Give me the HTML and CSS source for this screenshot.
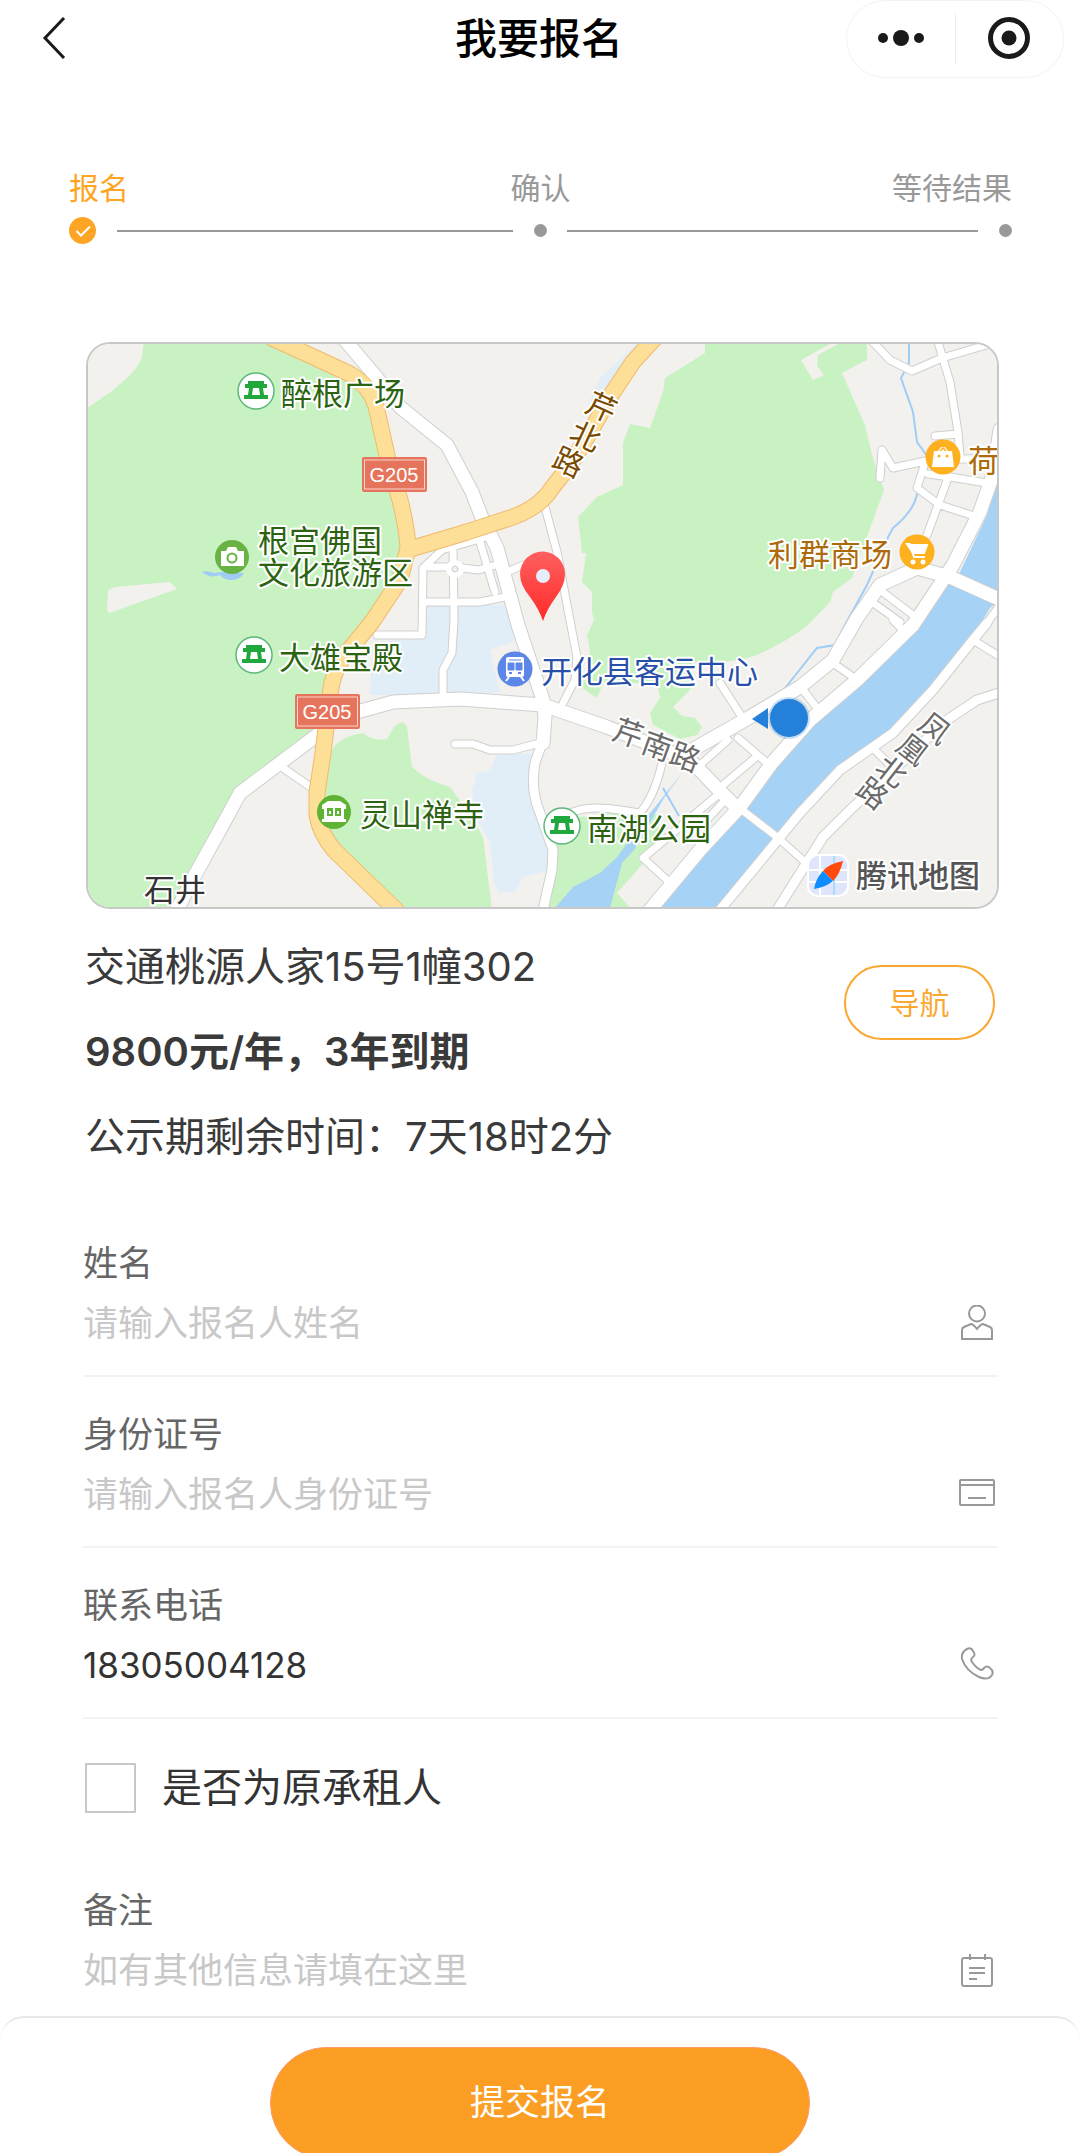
FILE: index.html
```html
<!DOCTYPE html>
<html lang="zh-CN">
<head>
<meta charset="utf-8">
<meta name="viewport" content="width=device-width, initial-scale=1">
<title>我要报名</title>
<link rel="stylesheet" href="styles.css">
</head>
<body>
<div class="page">
  <header class="navbar">
    <button class="back" type="button" aria-label="返回">
      <svg width="26" height="44" viewBox="0 0 26 44"><path d="M22 1 3 21l19 20" fill="none" stroke="#1a1a1a" stroke-width="3"/></svg>
    </button>
    <h1 class="title">我要报名</h1>
    <div class="capsule">
      <button class="capsule-btn" type="button" aria-label="更多">
        <svg width="48" height="44" viewBox="0 0 48 44"><g fill="#1a1a1a"><circle cx="6" cy="21" r="5"/><circle cx="24" cy="21" r="8"/><circle cx="42" cy="21" r="5"/></g></svg>
      </button>
      <button class="capsule-btn" type="button" aria-label="关闭">
        <svg width="44" height="44" viewBox="0 0 44 44"><circle cx="22" cy="21" r="18.500" fill="none" stroke="#1a1a1a" stroke-width="5"/><circle cx="22" cy="21" r="7.500" fill="#1a1a1a"/></svg>
      </button>
    </div>
  </header>

  <main class="content">
    <section class="steps" aria-label="进度">
      <div class="step-labels">
        <span class="step-name active">报名</span>
        <span class="step-name">确认</span>
        <span class="step-name last">等待结果</span>
      </div>
      <div class="step-track">
        <div class="track-part">
          <svg class="check" width="27" height="27" viewBox="0 0 27 27"><circle cx="13.500" cy="13.500" r="13.500" fill="#ffa526"/><path d="m7.500 14 4.500 4.500 9-9" fill="none" stroke="#fff" stroke-width="2"/></svg>
          <span class="track-line"></span>
        </div>
        <span class="dot"></span>
        <div class="track-part">
          <span class="track-line"></span>
          <span class="dot"></span>
        </div>
      </div>
    </section>

    <section class="map" aria-label="地图">
      <svg class="map-svg" viewBox="88 344 909 563" role="img" aria-label="房屋位置">
        <defs>
          <linearGradient id="pin" x1="0" y1="0" x2="0" y2="1"><stop offset="0" stop-color="#ff6060"/><stop offset="1" stop-color="#ff2a2a"/></linearGradient>
          <g id="pavilion">
            <circle r="18" fill="#fff" stroke="#5cb87a" stroke-width="1.500"/>
            <path d="M-8-10H8v3h3v4H7l1 7h4v4h-24V4h4l1-7h-4v-4h3zM-3-3-4 4h8L3-3z" fill="#20a83c" fill-rule="evenodd"/>
          </g>
        </defs>
        <rect x="80" y="336" width="930" height="580" fill="#f2f1ee"/>
        <g fill="#c9f2c3">
          <path d="M144 340 142 357Q138 368 128 377L112 391 86 409V910H175L225 815 240 790 318 732 330 680 345 652 374 622 402 580 408 545 400 498 380 425 368 390 340 372 270 340Z"/>
          <path d="M332 750Q340 736 363 733 375 742 387 739L394 727Q402 718 407 727L412 767Q425 780 450 787L472 817 483 837 492 910H400L335 847 320 800Z"/>
          <path d="M705 340V353L665 378 663 392 650 428 630 424 623 443V485L597 497 578 517 582 553H586L582 582 592 592V612L594 620 587 635 590 652 582 688 597 698 603 683H657L660 698 650 713 653 725 680 739 697 735 702 727 695 718 682 716 673 707 690 690 692 662Q735 664 757 655 785 643 808 625L830 602 833 592 852 578 884 490 872 455 865 425 842 373 867 360V340Z"/>
          <path d="M553 850 580 817 633 811 660 815 655 850 617 893 632 910H546Z"/>
        </g>
        <path d="M801 360 830 344H838L818 355 817 366 824 375 813 380ZM108 590 115 587 170 582 177 589 109 613 107 609Z" fill="#f2f1ee"/>
        <g fill="#e1eef8">
          <path d="M427 605H507L520 640 503 645 490 650 500 692 460 695H370L373 643 427 637Z"/>
          <path d="M497 755 535 753 532 787 547 820 551 870 523 877 515 892 500 893 494 883 490 843 477 820 472 793 477 773 490 770Z"/>
          <path d="m637 344-37 34-13 30-5 10 20-8 38-55zM550 475l-7 15 14-6z"/>
        </g>
        <g fill="#a6d2f6">
          <path d="M1000 470 987 515 960 572 948 583 920 620 857 684 817 720 790 740 743 805 700 857 655 910H715L772 842 800 810 840 765 890 730 967 647 990 608 1000 600Z"/>
          <path d="M555 908 573 887 600 873 617 857 647 817 683 772 664 798 634 850 622 863 610 908Z"/>
          <path d="M202 572q5-2 12 1 10-2 16 0h14q-4 7-12 7t-12-5q-10 4-18-3" fill="#9fcbf5"/>
        </g>
        <path d="M909 342V363L901 378 913 412 917 442 930 460M918 480 917 495Q913 512 893 528 888 536 885 545L867 585 845 625 835 645 817 648 782 692M663 788l16 28" fill="none" stroke="#9fcdf8" stroke-width="2"/>
        <defs>
          <g id="small">
            <path d="M377 635H422L423 568 442 550 483 538M428 567H455L478 570 503 563M453 548 454 620 452 653 443 670V695M425 602H480L505 597M480 542 495 592M507 572 523 565M545 507 557 552 568 610 577 657 575 680 563 703M283 768 312 788M455 744H473L490 750H513L540 743M573 812Q590 805 620 810L640 813Q655 795 662 763M720 683 742 717"/>
            <path d="M833 663 853 677M803 690 817 708M738 738 767 763M723 785 755 758M700 765 728 740M720 793 643 858 667 880M704 823 727 798M880 590 913 615M872 602 900 622M893 620 905 632M973 640 999 656M873 748 889 764M1000 605 987 623M733 803 777 837 805 862"/>
            <path d="M873 342 890 360 912 371 942 358 990 344M938 342 950 382 958 432 960 456M935 436 958 434M880 478 882 450 893 468 930 460 1000 458M924 466 917 488 940 505 977 517M928 474 950 477 987 483M948 478 938 505 927 535"/>
          </g>
          <g id="middle">
            <path d="M543 740 535 763Q530 790 540 813L553 850 552 870 543 910M999 693 977 700 947 720 850 810 823 837 777 910M987 623 973 640 933 690 893 733 873 747 840 770 800 813 767 853 720 910"/>
          </g>
          <g id="large">
            <path d="M345 340 377 378 400 407 447 445 472 492 482 518 497 548 518 625 543 700 545 717 543 743M357 712 393 702 460 699 543 705 607 727 690 760 717 788 737 808M320 733 280 763 240 793 227 817 195 875 177 910"/>
            <path d="M1000 430 993 475 980 512 953 565 913 625 857 680 810 720 772 763 740 807 700 850 650 910M999 599 950 577 917 568 880 585 857 618 833 660 800 687 750 717 692 750"/>
          </g>
          <path id="trunk" d="M272 338 320 360 350 374Q370 386 376 406L388 460 400 500Q407 528 408 548L400 580 372 622 345 655Q332 672 330 695L323 753 317 793V815Q320 833 334 850L367 882 396 910M408 550 417 547 467 532 513 517Q540 507 552 488L570 465 590 432 613 392 633 362 655 338"/>
        </defs>
        <g fill="none" stroke-linecap="round" stroke-linejoin="round">
          <g stroke="#cfcfcf"><use href="#small" stroke-width="9"/><use href="#middle" stroke-width="11"/><use href="#large" stroke-width="15"/></g>
          <g stroke="#fff"><use href="#small" stroke-width="7"/><use href="#middle" stroke-width="9"/><use href="#large" stroke-width="13"/></g>
          <use href="#trunk" stroke="#f0b96c" stroke-width="17"/>
          <use href="#trunk" stroke="#fddf98" stroke-width="15"/>
          <circle cx="455" cy="569" r="6" fill="#f2f1ee" stroke="#fff" stroke-width="6"/>
          <circle cx="455" cy="569" r="3" stroke="#cfcfcf"/>
        </g>

        <g class="shield">
          <rect x="362" y="457" width="65" height="35" rx="2" fill="#e6745c"/><rect x="364.500" y="460" width="60" height="29" fill="none" stroke="#fff" stroke-opacity=".7"/><text x="394" y="482">G205</text>
          <rect x="295" y="694" width="65" height="35" rx="2" fill="#e6745c"/><rect x="297.500" y="697" width="60" height="29" fill="none" stroke="#fff" stroke-opacity=".7"/><text x="327" y="719">G205</text>
        </g>

        <use href="#pavilion" x="256" y="391"/>
        <use href="#pavilion" x="254" y="655"/>
        <use href="#pavilion" x="562" y="826"/>
        <g transform="translate(232 557)"><circle r="17" fill="#69b345"/><path d="M-11-6h5l2-4h8l2 4h6V9h-23z" fill="#fff"/><circle r="4.500" cy="1" fill="none" stroke="#69b345" stroke-width="2"/></g>
        <g transform="translate(334 812)"><circle r="17" fill="#5eb234"/><path d="M-6-11H6l6 4v4h-2V7h2v3h-24V7h2V-3h-2v-4z" fill="#fff"/><path d="M-7-4h6v8h-6zM1-4h6v8H1z" fill="#5eb234"/><path d="M-4-1v3M4-1v3" stroke="#fff" stroke-width="2"/></g>
        <g transform="translate(943 457)"><circle r="17.500" fill="#feb01e"/><path d="M-11 10-9-6h4l3-4h4l3 4h4L11 10z" fill="#fff"/><path d="M-3-6 0-9 3-6" fill="none" stroke="#feb01e" stroke-width="1.500"/><circle cx="-4" cy="-1" r="1.500" fill="#feb01e"/><circle cx="4" cy="-1" r="1.500" fill="#feb01e"/></g>
        <g transform="translate(917 552)"><circle r="17.500" fill="#feb01e"/><path d="M-10-8h3l1 1H10L7 1H-4z" fill="#fff" stroke="#fff" stroke-width="2"/><path d="M-7-7-3 5H8" fill="none" stroke="#fff" stroke-width="2"/><circle cx="-4" cy="10" r="2.500" fill="#fff"/><circle cx="6" cy="10" r="2.500" fill="#fff"/></g>
        <g transform="translate(515 669)"><circle r="17.500" fill="#5c86e8"/><rect x="-9" y="-12" width="18" height="20" rx="2" fill="#fff"/><path d="M-6-9H6M-7-6h6v7h-6zM1-6h6v7H1z" fill="#5c86e8" stroke="#5c86e8" stroke-width="1"/><path d="M-6 4h3M3 4h3" stroke="#5c86e8" stroke-width="2"/><path d="m-6 8-3 4M6 8l3 4" stroke="#fff" stroke-width="2"/></g>

        <g class="poi park">
          <text x="281" y="405">醉根广场</text>
          <text x="258" y="552">根宫佛国</text>
          <text x="258" y="584">文化旅游区</text>
          <text x="279" y="669">大雄宝殿</text>
          <text x="360" y="826">灵山禅寺</text>
          <text x="587" y="840">南湖公园</text>
        </g>
        <g class="poi shop">
          <text x="768" y="566">利群商场</text>
          <text x="968" y="472">荷</text>
        </g>
        <text class="poi place" x="144" y="901">石井</text>
        <text class="poi station" x="541" y="683">开化县客运中心</text>
        <g class="poi road-main">
          <text transform="translate(601 408) rotate(25)" y="10">芹</text>
          <text transform="translate(585 437) rotate(25)" y="10">北</text>
          <text transform="translate(568 463) rotate(25)" y="10">路</text>
        </g>
        <g class="poi road">
          <text transform="translate(628 734) rotate(20)" y="10">芹</text>
          <text transform="translate(657 747) rotate(20)" y="10">南</text>
          <text transform="translate(685 758) rotate(20)" y="10">路</text>
          <text transform="translate(934 729) rotate(38)" y="10">凤</text>
          <text transform="translate(912 750) rotate(38)" y="10">凰</text>
          <text transform="translate(891 772) rotate(38)" y="10">北</text>
          <text transform="translate(872 794) rotate(38)" y="10">路</text>
        </g>

        <path d="M543 621Q539 609 530 597 520 585 520 574A22.500 22.500 0 0 1 565 574Q565 585 556 597 547 609 543 621Z" fill="url(#pin)"/>
        <circle cx="543" cy="576" r="7" fill="#e8edfb"/>
        <circle cx="789" cy="718" r="21" fill="#2480d8" opacity=".25"/>
        <circle cx="789" cy="718" r="19" fill="#2480d8"/>
        <path d="M752 719 768 708V729Z" fill="#2480d8"/>

        <rect x="807" y="854" width="42" height="43" rx="10" fill="#fff"/>
        <rect x="809" y="856" width="38" height="39" rx="9" fill="#dfe6fb"/>
        <path d="M809 870H847M809 882H847M820 856V895" stroke="#fff" stroke-width="2"/>
        <path d="M834 856V895" stroke="#a8dcfa" stroke-width="2"/>
        <path d="M843 861Q828 864 823 871L833 881Q840 874 843 861Z" fill="#ff4a0d"/>
        <path d="M814 889Q816 878 823 871L833 881Q826 887 814 889Z" fill="#0d8dff"/>
        <text class="poi brand" x="856" y="887">腾讯地图</text>
      </svg>
    </section>

    <section class="info">
      <div class="info-text">
        <p class="info-line">交通桃源人家15号1幢302</p>
        <p class="info-line price">9800元/年，3年到期</p>
        <p class="info-line">公示期剩余时间：7天18时2分</p>
      </div>
      <button class="navigate" type="button">导航</button>
    </section>

    <form class="form" id="signup">
      <div class="field">
        <label class="field-label" for="name">姓名</label>
        <div class="field-row">
          <input class="field-input" id="name" type="text" placeholder="请输入报名人姓名">
          <svg class="icon" viewBox="0 0 36 36"><circle cx="18" cy="8.500" r="8"/><path d="M3 34V25q0-2 2-3l7-3q2 0 6 5 4-5 6-5l7 3q2 1 2 3v9z"/></svg>
        </div>
      </div>
      <div class="field">
        <label class="field-label" for="idno">身份证号</label>
        <div class="field-row">
          <input class="field-input" id="idno" type="text" placeholder="请输入报名人身份证号">
          <svg class="icon" viewBox="0 0 36 36"><rect x="1" y="4" width="34" height="25" rx="1"/><path d="M1 9H35M9 22H27"/></svg>
        </div>
      </div>
      <div class="field">
        <label class="field-label" for="phone">联系电话</label>
        <div class="field-row">
          <input class="field-input" id="phone" type="tel" value="18305004128">
          <svg class="icon" viewBox="0 0 36 36"><path d="M8 2q4-2 6 2 3 4 0 6-3 2-1 5 4 6 9 8 2 0 3-2 3-3 6 0 4 3 2 7-4 6-13 2Q7 24 3 12 2 5 8 2Z"/></svg>
        </div>
      </div>
      <div class="check-row">
        <input class="checkbox" id="tenant" type="checkbox">
        <label class="check-label" for="tenant">是否为原承租人</label>
      </div>
      <div class="field note">
        <label class="field-label" for="note">备注</label>
        <div class="field-row">
          <input class="field-input" id="note" type="text" placeholder="如有其他信息请填在这里">
          <svg class="icon" viewBox="0 0 36 36"><rect x="3" y="6" width="30" height="28" rx="2"/><path d="M11 2v6M26 2v6M10 16H26M10 21H26M10 27H18"/></svg>
        </div>
      </div>
    </form>
  </main>

  <footer class="footer">
    <button class="submit" type="submit" form="signup">提交报名</button>
  </footer>
</div>
</body>
</html>
```
FILE: styles.css
```css
* {
  box-sizing: border-box;
}

body {
  margin: 0;
  background: #fff;
  color: #3a3a3a;
  font-family: "Inter", "Noto Sans CJK SC", sans-serif;
}

button,
input {
  font-family: inherit;
}

button {
  padding: 0;
  border: 0;
  background: none;
}

.page {
  display: flex;
  flex-direction: column;
  height: 100vh;
  overflow: hidden;
}

/* top bar */
.navbar {
  display: grid;
  grid-template-columns: 1fr auto 1fr;
  align-items: center;
  flex: none;
  height: 78px;
  padding: 0 16px 0 42px;
}

.back {
  justify-self: start;
  display: flex;
}

.title {
  margin: 0;
  padding-right: 28px;
  color: #000;
  font-size: 42px;
  font-weight: 500;
  line-height: 78px;
}

.capsule {
  justify-self: end;
  display: flex;
  width: 218px;
  height: 78px;
  padding: 12px 0;
  border: 1px solid #f3f3f3;
  border-radius: 39px;
}

.capsule-btn {
  display: flex;
  flex: 1;
  align-items: center;
  justify-content: center;
}

.capsule-btn + .capsule-btn {
  border-left: 1px solid #ececec;
}

.content {
  flex: 1;
  min-height: 0;
  overflow: hidden auto;
}

/* progress */
.steps {
  padding: 88px 68px 98px 69px;
}

.step-labels,
.step-track {
  display: grid;
  grid-template-columns: 1fr auto 1fr;
  align-items: center;
}

.step-name {
  color: #999;
  font-size: 30px;
  line-height: 44px;
}

.step-name.active {
  color: #ffa526;
}

.step-name.last {
  text-align: right;
}

.step-track {
  margin-top: 7px;
}

.track-part {
  display: flex;
  align-items: center;
  gap: 21px;
}

.track-part:first-child {
  padding-right: 21px;
}

.track-part:last-child {
  padding-left: 20px;
}

.track-line {
  flex: 1;
  height: 2px;
  background: #999;
}

.dot {
  width: 13px;
  height: 13px;
  border-radius: 50%;
  background: #999;
}

/* map */
.map {
  margin: 0 81px 0 86px;
  overflow: hidden;
  border: 2px solid #c8c8c8;
  border-radius: 24px;
}

.map-svg {
  display: block;
  width: 100%;
  height: auto;
}

.poi {
  font-size: 31px;
  stroke: #fff;
  stroke-width: 4px;
  stroke-linejoin: round;
  paint-order: stroke;
}

.park {
  fill: #2c6310;
}

.shop {
  fill: #ad6a0a;
}

.place {
  fill: #333;
}

.station {
  fill: #2850a8;
}

.road-main,
.road {
  font-size: 30px;
  text-anchor: middle;
}

.road-main {
  fill: #7a4a00;
}

.road {
  fill: #6b6b6b;
}

.brand {
  fill: #555;
  font-weight: 500;
}

.shield {
  fill: #fff;
  font-family: "Liberation Sans", sans-serif;
  font-size: 20px;
  text-anchor: middle;
}

/* listing */
.info {
  display: flex;
  align-items: flex-start;
  justify-content: space-between;
  padding: 15px 85px 27px;
}

.info-line {
  margin: 0;
  font-size: 40px;
  line-height: 85px;
}

.price {
  font-weight: 600;
}

.navigate {
  width: 151px;
  height: 75px;
  margin-top: 41px;
  padding-bottom: 4px;
  border: 2px solid #faa832;
  border-radius: 38px;
  color: #faa832;
  font-size: 30px;
}

/* form */
.form {
  padding: 0 82px 0 83px;
}

.field {
  padding: 28px 0 22px;
  border-bottom: 2px solid #f3f3f3;
}

.field.note {
  margin-top: 40px;
  padding-bottom: 12px;
  border-bottom: 0;
}

.field-label {
  display: block;
  color: #666;
  font-size: 35px;
  line-height: 59px;
}

.field-row {
  display: flex;
  align-items: center;
  padding-right: 3px;
}

.field-input {
  flex: 1;
  min-width: 0;
  height: 60px;
  padding: 0;
  border: 0;
  outline: 0;
  background: none;
  color: #333;
  font-size: 35px;
}

.field-input::placeholder {
  color: #c8c8c8;
  opacity: 1;
}

.icon {
  flex: none;
  width: 36px;
  height: 36px;
  fill: none;
  stroke: #999;
  stroke-width: 2;
}

.check-row {
  display: flex;
  align-items: center;
  gap: 26px;
  margin-top: 44px;
  padding-left: 2px;
}

.checkbox {
  width: 51px;
  height: 50px;
  margin: 0;
  appearance: none;
  border: 2px solid #c8c8c8;
}

.checkbox:checked {
  background: #ffa526;
}

.check-label {
  color: #333;
  font-size: 40px;
  line-height: 50px;
}

/* submit bar, its lower edge runs just past the screen */
.footer {
  display: flex;
  flex: none;
  justify-content: center;
  margin-bottom: -6px;
  padding-top: 29px;
  border-top: 2px solid #e8e8e8;
  border-radius: 24px 24px 0 0;
}

.submit {
  width: 50%;
  height: 112px;
  padding-bottom: 8px;
  border: 1px solid #ff9a6c;
  border-radius: 56px;
  background: #fc9d24;
  color: #fff;
  font-size: 35px;
}
```
